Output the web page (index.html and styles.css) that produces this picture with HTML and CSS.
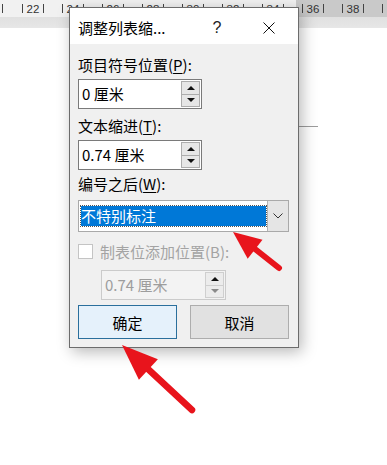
FILE: index.html
```html
<!DOCTYPE html>
<html lang="zh">
<head>
<meta charset="utf-8">
<link rel="stylesheet" href="styles.css">
</head>
<body>
<div class="doc">
  <div class="ruler">
    <span class="rg first"><i class="tk"></i></span>
    <span class="rg"><i class="tk"></i><span class="rn">22</span><i class="tk"></i></span>
    <span class="rg"><i class="tk"></i><span class="rn">24</span><i class="tk"></i></span>
    <span class="rg"><i class="tk"></i><span class="rn">26</span><i class="tk"></i></span>
    <span class="rg"><i class="tk"></i><span class="rn">28</span><i class="tk"></i></span>
    <span class="rg"><i class="tk"></i><span class="rn">30</span><i class="tk"></i></span>
    <span class="rg"><i class="tk"></i><span class="rn">32</span><i class="tk"></i></span>
    <span class="rg"><i class="tk"></i><span class="rn">34</span><i class="tk"></i></span>
    <span class="rg"><i class="tk"></i><span class="rn">36</span><i class="tk"></i></span>
    <span class="rg"><i class="tk"></i><span class="rn">38</span><i class="tk"></i></span>
    <span class="rg last"><i class="tk"></i></span>
  </div>
  <div class="ruler-shade"></div>
  <div class="page"></div>
  <div class="docline"></div>
</div>

<div class="dialog">
  <div class="titlebar">
    <span class="title">调整列表缩...</span>
    <span class="help">?</span>
    <span class="close">
      <svg width="12" height="12" viewBox="0 0 12 12"><path d="M0.5 0.5 L11.5 11.5 M11.5 0.5 L0.5 11.5" stroke="#111" stroke-width="1" fill="none"/></svg>
    </span>
  </div>
  <div class="body">
    <div class="label">项目符号位置(<u>P</u>):</div>
    <div class="spin-input">
      <span class="val">0 厘米</span>
      <span class="spinner">
        <span class="sbtn"><i class="tri up"></i></span>
        <span class="sbtn"><i class="tri down"></i></span>
      </span>
    </div>
    <div class="label gap">文本缩进(<u>T</u>):</div>
    <div class="spin-input">
      <span class="val">0.74 厘米</span>
      <span class="spinner">
        <span class="sbtn"><i class="tri up"></i></span>
        <span class="sbtn"><i class="tri down"></i></span>
      </span>
    </div>
    <div class="label gap2">编号之后(<u>W</u>):</div>
    <div class="select">
      <div class="sel-field"><span class="sel-text">不特别标注</span></div>
      <div class="sel-btn">
        <svg width="10" height="6" viewBox="0 0 10 6"><path d="M0.5 0.5 L5 5 L9.5 0.5" stroke="#333" stroke-width="1" fill="none"/></svg>
      </div>
    </div>
    <div class="check-row">
      <span class="checkbox"></span>
      <span class="check-label">制表位添加位置(B):</span>
    </div>
    <div class="spin-input disabled">
      <span class="val">0.74 厘米</span>
      <span class="spinner">
        <span class="sbtn"><i class="tri up"></i></span>
        <span class="sbtn"><i class="tri down light"></i></span>
      </span>
    </div>
    <div class="buttons">
      <span class="btn primary">确定</span>
      <span class="btn">取消</span>
    </div>
  </div>
</div>

<svg class="arrows" width="387" height="465" viewBox="0 0 387 465">
  <line x1="255" y1="249" x2="279" y2="268" stroke="#e8141c" stroke-width="6" stroke-linecap="round"/>
  <polygon points="233,232 247.7,258.7 262.5,239.7" fill="#e8141c"/>
  <line x1="148" y1="369" x2="192" y2="410" stroke="#e8141c" stroke-width="6.5" stroke-linecap="round"/>
  <polygon points="122,345 138.9,379.8 157.9,359.2" fill="#e8141c"/>
</svg>
</body>
</html>
```

FILE: styles.css
```css
* { box-sizing: border-box; }

body {
  margin: 0;
  width: 387px;
  height: 465px;
  position: relative;
  overflow: hidden;
  background: #ffffff;
  font-family: "Noto Sans CJK SC", "Noto Sans", sans-serif;
  color: #000;
}

.doc {
  display: flex;
  flex-direction: column;
  height: 465px;
}

.ruler {
  height: 17px;
  display: flex;
  align-items: center;
  background: linear-gradient(to right, #f1f1f1 0, #f1f1f1 296px, #c9c9c9 296px);
}

.rg {
  display: flex;
  align-items: center;
  width: 40px;
  flex: none;
}

.rg.first {
  width: 22px;
  padding-left: 2px;
}

.rg.last {
  width: 5px;
}

.tk {
  display: block;
  width: 1px;
  height: 9px;
  background: #444;
}

.rn {
  width: 20px;
  text-align: center;
  font-family: "Liberation Sans", Arial, sans-serif;
  font-size: 11.5px;
  line-height: 12px;
  color: #333;
}

.ruler-shade {
  height: 11px;
  background: linear-gradient(#e0e0e0, #e7e7e7);
}

.page {
  flex: 1;
  background: #fff;
}

.docline {
  position: absolute;
  left: 298px;
  top: 126px;
  width: 20px;
  height: 1px;
  background: #9c9c9c;
}

.dialog {
  position: absolute;
  left: 69px;
  top: 7px;
  width: 230px;
  height: 341px;
  border: 1px solid #6c6c6c;
  background: #f0f0f0;
  box-shadow: 3px 4px 14px rgba(0, 0, 0, 0.28);
  display: flex;
  flex-direction: column;
}

.titlebar {
  height: 36px;
  background: #fff;
  display: flex;
  align-items: center;
  padding-left: 8px;
  padding-top: 3px;
}

.title {
  flex: 1;
  font-size: 15px;
  line-height: 20px;
  white-space: nowrap;
}

.help {
  width: 46px;
  text-align: center;
  font-family: "Liberation Sans", sans-serif;
  font-size: 16px;
  line-height: 20px;
  color: #222;
}

.close {
  width: 58px;
  display: flex;
  justify-content: center;
  align-items: center;
}

.body {
  flex: 1;
  padding: 11px 8px 0 8px;
  display: flex;
  flex-direction: column;
  align-items: flex-start;
}

.label {
  font-size: 15px;
  line-height: 20px;
  height: 20px;
  white-space: nowrap;
}

.label u {
  text-decoration-thickness: 1px;
  text-underline-offset: 2px;
}

.label.gap { margin-top: 7px; }
.label.gap2 { margin-top: 4px; }

.spin-input {
  width: 124px;
  height: 30px;
  margin-top: 4px;
  border: 1px solid #7a7a7a;
  background: #fff;
  display: flex;
  align-items: center;
  padding-left: 3px;
  padding-right: 1px;
}

.val {
  flex: 1;
  font-size: 15px;
  line-height: 20px;
  white-space: nowrap;
}

.spinner {
  width: 19px;
  height: 26px;
  display: flex;
  flex-direction: column;
}

.sbtn {
  flex: 1;
  border: 1px solid #acacac;
  background: #e6e6e6;
  display: flex;
  align-items: center;
  justify-content: center;
}

.sbtn + .sbtn { border-top: none; }

.tri {
  display: block;
  width: 0;
  height: 0;
  border-left: 4px solid transparent;
  border-right: 4px solid transparent;
}

.tri.up { border-bottom: 4px solid #111; }
.tri.down { border-top: 4px solid #111; }
.tri.down.light { border-top-color: #8a8a8a; }

.select {
  margin-top: 6px;
  width: 211px;
  height: 32px;
  display: flex;
  border: 1px solid #a9a9a9;
  background: #fff;
}

.sel-field {
  flex: 1;
  padding: 5px 1px 5px 2px;
  display: flex;
}

.sel-text {
  flex: 1;
  background: #0078d7;
  outline: 1px dotted #555;
  color: #fff;
  font-size: 15px;
  line-height: 20px;
  padding-left: 0;
  white-space: nowrap;
}

.sel-btn {
  width: 21px;
  background: #e5e5e5;
  border-left: 1px solid #b4b4b4;
  display: flex;
  align-items: center;
  justify-content: center;
}

.check-row {
  margin-top: 12px;
  display: flex;
  align-items: center;
  height: 15px;
}

.checkbox {
  width: 15px;
  height: 15px;
  border: 1px solid #c4c4c4;
  background: #fff;
  margin-right: 7px;
}

.check-label {
  font-size: 15px;
  line-height: 20px;
  color: #a3a3a3;
  white-space: nowrap;
}

.spin-input.disabled {
  margin-top: 11px;
  margin-left: 23px;
  width: 125px;
  background: #f3f3f3;
  border-color: #cbcbcb;
}

.spin-input.disabled .val { color: #9d9d9d; }

.spin-input.disabled .sbtn {
  background: #ececec;
  border-color: #cfcfcf;
}

.buttons {
  margin-top: 5px;
  display: flex;
  gap: 13px;
}

.btn {
  width: 99px;
  height: 34px;
  display: flex;
  align-items: center;
  justify-content: center;
  font-size: 15px;
  border: 1px solid #adadad;
  background: #e1e1e1;
}

.btn.primary {
  background: #e5f1fb;
  border-color: #2a6f9c;
}

.arrows {
  position: absolute;
  left: 0;
  top: 0;
  pointer-events: none;
}
```
